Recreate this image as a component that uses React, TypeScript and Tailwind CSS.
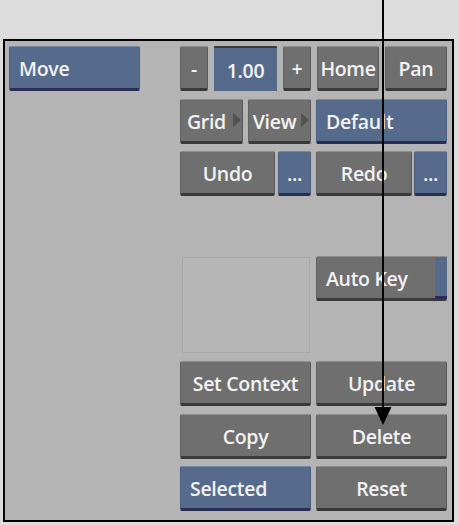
import React from "react";

const font = { fontFamily: '"Open Sans", "DejaVu Sans", sans-serif' };

function Btn({
  children,
  className = "",
  blue = false,
  align = "center",
  tri = false,
}: {
  children?: React.ReactNode;
  className?: string;
  blue?: boolean;
  align?: "center" | "left";
  tri?: boolean;
}) {
  const face = blue
    ? "bg-[#566b8c] border-t-[#7488a6] border-b-[#2b2d55] border-l-[#4d5f7e] border-r-[#4d5f7e]"
    : "bg-[#6f6f6f] border-t-[#8c8c8c] border-b-[#393939] border-l-[#626262] border-r-[#5a5a5a]";
  return (
    <div
      className={`relative flex h-[45px] items-center pt-[3px] border-t border-b-[3px] border-x rounded-[2px] text-[19.5px] font-semibold tracking-[-0.3px] text-[#f2f2f2] ${face} ${
        align === "left" ? "justify-start pl-[9px]" : "justify-center"
      } ${className}`}
    >
      <span className="leading-none">{children}</span>
      {tri && (
        <span className="absolute right-[1px] top-1/2 -translate-y-1/2 h-0 w-0 border-y-[7px] border-y-transparent border-l-[8px] border-l-[#525252]" />
      )}
    </div>
  );
}

export default function App() {
  return (
    <div className="relative w-[459px] h-[525px] bg-[#dcdcdc] overflow-hidden" style={font}>
      <div className="pt-[39px] pl-[3px]">
        <div className="w-[451px] h-[483px] border-2 border-black bg-[#b4b4b4] flex pt-[5px] pl-[4px]">
          <div className="w-[131px]">
            <Btn blue align="left">Move</Btn>
          </div>
          <div className="ml-[40px] w-[267px] grid grid-cols-[131px_131px] gap-x-[5px] grid-rows-[repeat(9,45px)] gap-y-[7.5px]">
            {/* row 1 */}
            <div className="col-span-2 flex gap-[6px]">
              <Btn className="w-[28px]">-</Btn>
              <div className="flex h-[45px] w-[63px] items-center justify-center pt-[2px] bg-[#566b8c] border-t-2 border-t-[#3a3a3a] text-[19.5px] font-semibold text-[#f2f2f2] tracking-[-0.3px]">
                1.00
              </div>
              <Btn className="w-[28px]">+</Btn>
              <Btn className="w-[62px]">Home</Btn>
              <Btn className="w-[62px]">Pan</Btn>
            </div>
            {/* row 2 */}
            <div className="flex gap-[5px]">
              <Btn className="w-[63px] pr-[10px]" tri>Grid</Btn>
              <Btn className="w-[63px] pr-[10px]" tri>View</Btn>
            </div>
            <Btn blue align="left">Default</Btn>
            {/* row 3 */}
            <div className="flex gap-[3px]">
              <Btn className="w-[95px]">Undo</Btn>
              <Btn blue className="w-[33px]">...</Btn>
            </div>
            <div className="flex gap-[2px]">
              <Btn className="w-[96px]">Redo</Btn>
              <Btn blue className="w-[33px]">...</Btn>
            </div>
            {/* row 4 empty */}
            <div className="col-span-2" />
            {/* rows 5-6 */}
            <div className="row-span-2 flex items-start justify-center pt-[1px]">
              <div className="w-[128px] h-[96px] border border-[#a8a8a8] bg-[#b6b6b6]" />
            </div>
            <div className="flex">
              <Btn className="w-[131px]" align="left">Auto Key</Btn>
            </div>
            <div />
            {/* row 7 */}
            <Btn>Set Context</Btn>
            <Btn>Update</Btn>
            {/* row 8 */}
            <Btn>Copy</Btn>
            <Btn>Delete</Btn>
            {/* row 9 */}
            <Btn blue align="left">Selected</Btn>
            <Btn>Reset</Btn>
          </div>
        </div>
      </div>
      {/* Auto Key blue strip overlay */}
      <div className="absolute left-[435px] top-[257px] w-[12px] h-[42px] bg-[#566b8c] border-b-[3px] border-b-[#2b2d55]" />
      {/* callout arrow */}
      <svg className="absolute left-0 top-0 pointer-events-none" width="459" height="525">
        <line x1="383" y1="0" x2="383" y2="410" stroke="#000" strokeWidth="2" />
        <polygon points="374.5,407 391.5,407 383,425" fill="#000" />
      </svg>
    </div>
  );
}
